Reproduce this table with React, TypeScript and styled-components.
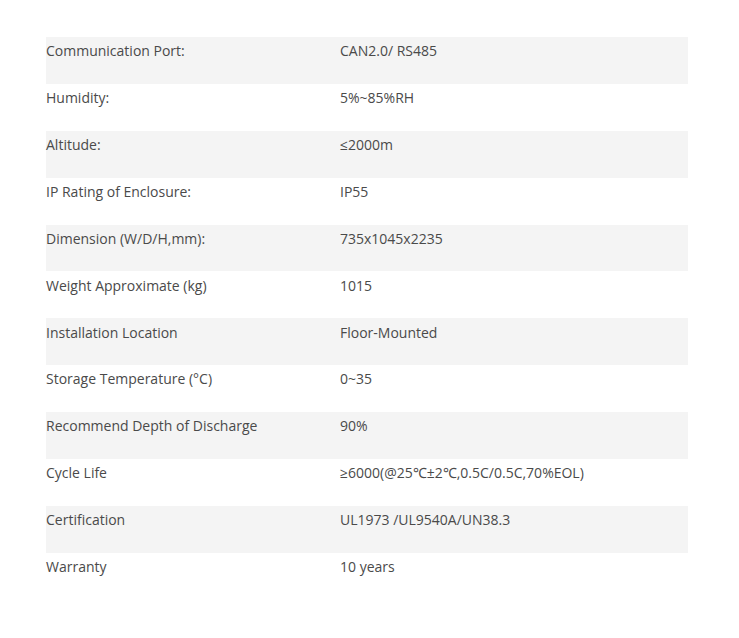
import React from "react";
import styled, { createGlobalStyle } from "styled-components";

const GlobalStyle = createGlobalStyle`
  body {
    margin: 0;
    background: #ffffff;
    font-family: "Open Sans", "Liberation Sans", sans-serif;
  }
`;

const Page = styled.div`
  padding: 37px 51px 37px 46px;
`;

const Table = styled.div`
  display: flex;
  flex-direction: column;
  width: 642px;
`;

const Row = styled.div<{ $shaded: boolean }>`
  display: grid;
  grid-template-columns: 294px 1fr;
  height: 46.9px;
  box-sizing: border-box;
  padding-top: 2.2px;
  background: ${(p) => (p.$shaded ? "#f4f4f4" : "#ffffff")};
`;

const Cell = styled.div`
  font-size: 14px;
  line-height: 24px;
  color: #4a4a4a;
`;

const rows: [string, string][] = [
  ["Communication Port:", "CAN2.0/ RS485"],
  ["Humidity:", "5%~85%RH"],
  ["Altitude:", "≤2000m"],
  ["IP Rating of Enclosure:", "IP55"],
  ["Dimension (W/D/H,mm):", "735x1045x2235"],
  ["Weight Approximate (kg)", "1015"],
  ["Installation Location", "Floor-Mounted"],
  ["Storage Temperature (°C)", "0~35"],
  ["Recommend Depth of Discharge", "90%"],
  ["Cycle Life", "≥6000(@25℃±2℃,0.5C/0.5C,70%EOL)"],
  ["Certification", "UL1973 /UL9540A/UN38.3"],
  ["Warranty", "10 years"],
];

export default function App() {
  return (
    <>
      <GlobalStyle />
      <Page>
        <Table>
          {rows.map(([k, v], i) => (
            <Row key={k} $shaded={i % 2 === 0}>
              <Cell>{k}</Cell>
              <Cell>{v}</Cell>
            </Row>
          ))}
        </Table>
      </Page>
    </>
  );
}
